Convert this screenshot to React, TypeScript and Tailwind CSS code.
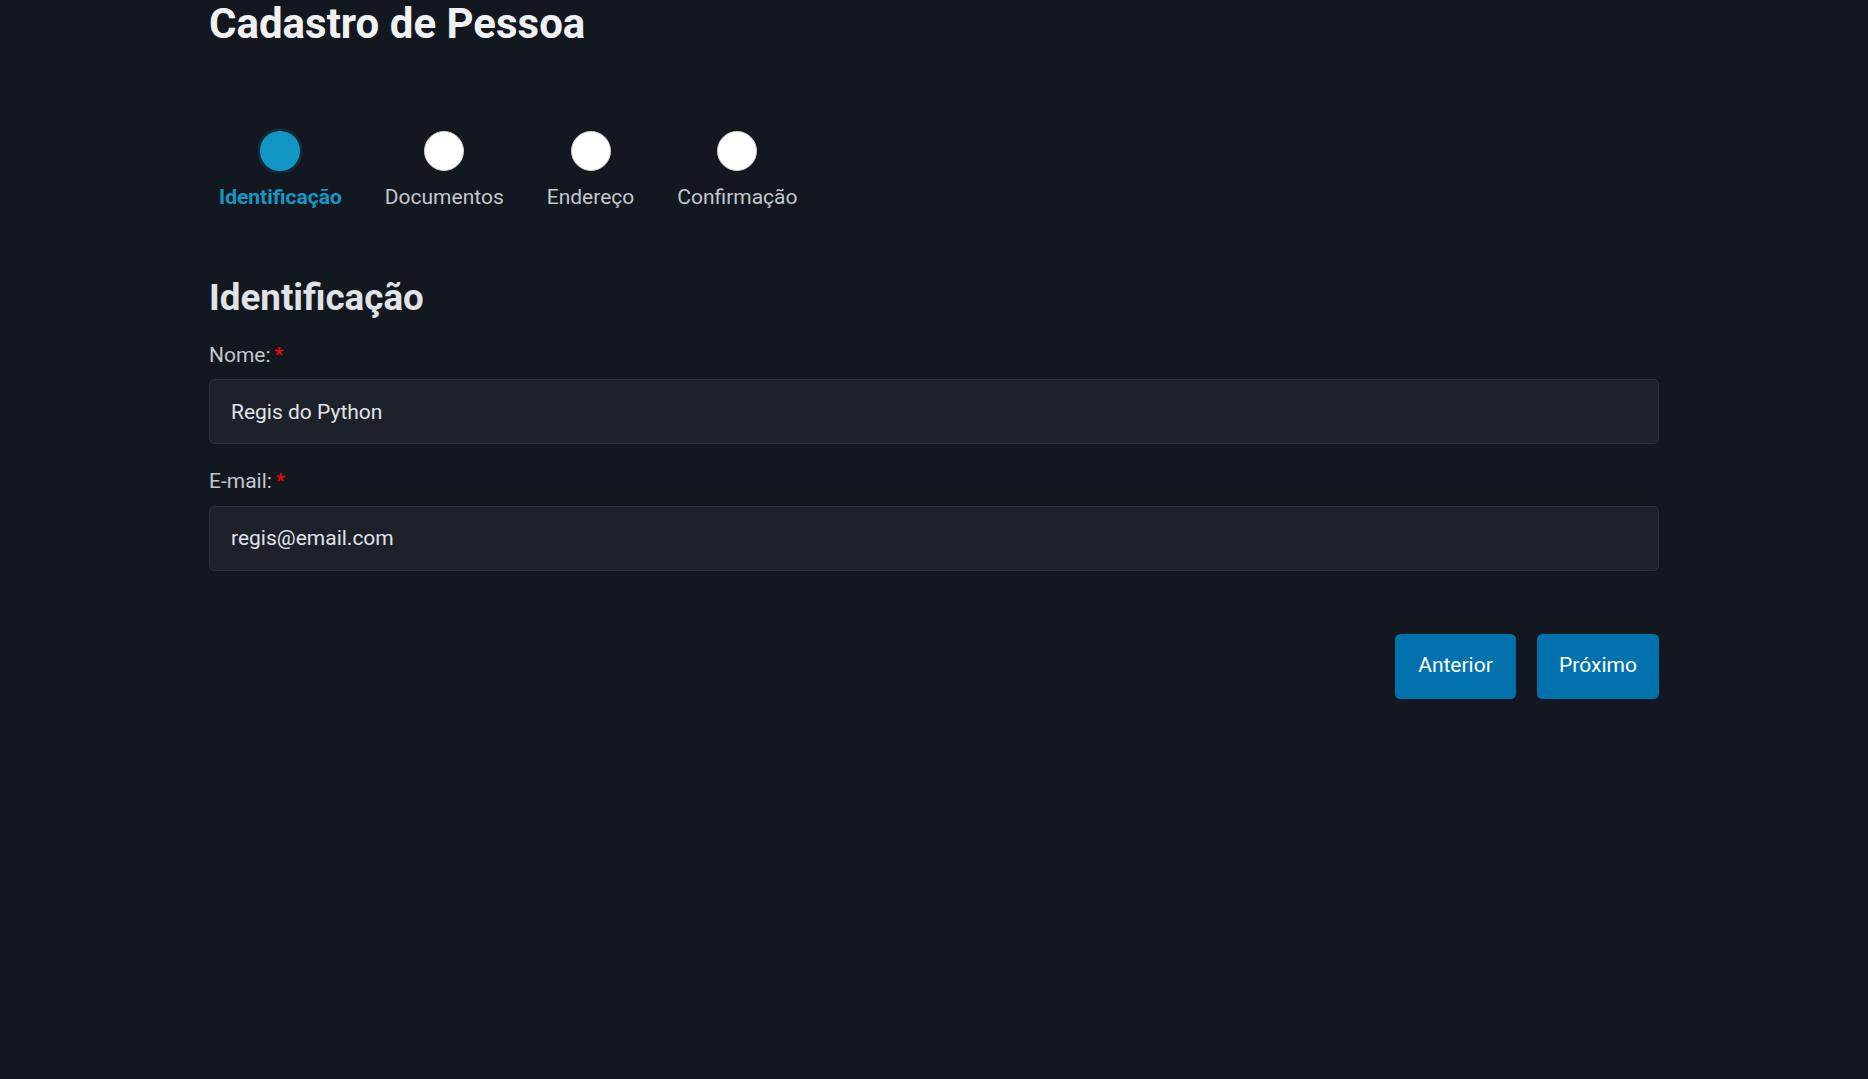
import { useState } from 'react'

const steps = ['Identificação', 'Documentos', 'Endereço', 'Confirmação']

export default function App() {
  const [nome, setNome] = useState('Regis do Python')
  const [email, setEmail] = useState('regis@email.com')
  const active = 0

  return (
    <div className="min-h-screen bg-[#13171f] text-[#c2c7d0] text-[21px] font-['Roboto',sans-serif]">
      <main className="w-[1450px] mx-auto">
        <h1 className="text-[42px] font-bold leading-[47px] text-[#f0f1f3]">Cadastro de Pessoa</h1>

        <div className="flex gap-[43px] pl-[10px] mt-[84px]">
          {steps.map((step, i) => (
            <div key={i} className="flex flex-col items-center">
              {i === active ? (
                <span className="w-10 h-10 rounded-full bg-[#1296c4] shadow-[0_0_0_3px_#0d2a3a]" />
              ) : (
                <span className="w-10 h-10 rounded-full bg-white border border-[#cfd2d6]" />
              )}
              <span
                className={
                  i === active
                    ? 'mt-[11px] leading-[31.5px] font-bold text-[#1597c5]'
                    : 'mt-[11px] leading-[31.5px] text-[#c2c7d0]'
                }
              >
                {step}
              </span>
            </div>
          ))}
        </div>

        <h2 className="mt-[62px] text-[36.75px] font-bold leading-[43px] text-[#e0e3e7]">Identificação</h2>

        <form className="mt-[21px]">
          <label className="block leading-[31.5px] mb-[8px]">
            Nome:<span className="text-[#ff0000] ml-1">*</span>
          </label>
          <input
            value={nome}
            onChange={(e) => setNome(e.target.value)}
            className="block w-full h-[65px] px-[21px] bg-[#1c212c] border border-[#2a3140] rounded-[5.25px] text-[#e0e3e7] outline-none"
          />

          <label className="block leading-[31.5px] mt-[22px] mb-[8px]">
            E-mail:<span className="text-[#ff0000] ml-1">*</span>
          </label>
          <input
            value={email}
            onChange={(e) => setEmail(e.target.value)}
            className="block w-full h-[65px] px-[21px] bg-[#1c212c] border border-[#2a3140] rounded-[5.25px] text-[#e0e3e7] outline-none"
          />

          <div className="flex justify-end gap-[21px] mt-[63px]">
            <button type="button" className="w-[121px] h-[65px] rounded-[5.25px] bg-[#0172ad] text-white">
              Anterior
            </button>
            <button type="button" className="w-[122px] h-[65px] rounded-[5.25px] bg-[#0172ad] text-white">
              Próximo
            </button>
          </div>
        </form>
      </main>
    </div>
  )
}
